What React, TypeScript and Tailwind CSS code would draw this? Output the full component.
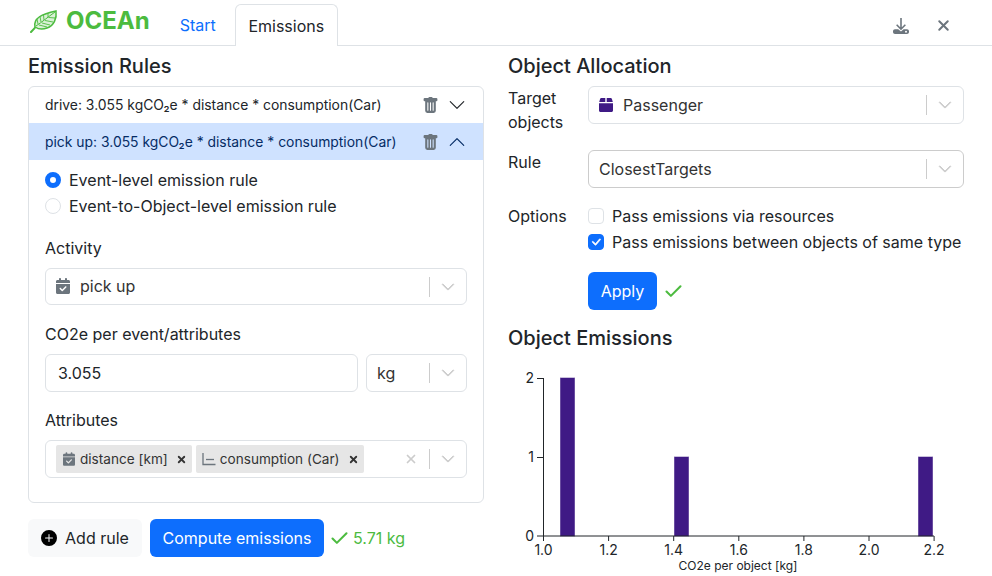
import { BsCheckLg, BsChevronDown, BsChevronUp, BsPlusCircleFill, BsTrashFill } from "react-icons/bs";
import { FaCalendarCheck } from "react-icons/fa6";
import { Check as CheckMark, X } from "lucide-react";

function Leaf() {
  return (
    <svg viewBox="0 0 28 23" className="h-[23px] w-[28px]" fill="none" stroke="#4cbb3f">
      <path d="M1 22 C3 20 5 18 7 15" strokeWidth="2" strokeLinecap="round" />
      <path d="M5 17 C3 8 12 4 26 1 C27 8 24 16 17 18 C12 20 8 19 5 17 Z" fill="#d9f1d5" strokeWidth="1.5" />
      <path d="M6 16 C12 12 18 7 25 2" strokeWidth="1" />
      <path d="M8 14 L7 9 M11 12 L10 6.5 M14 10 L13.5 5 M18 8 L18 3.5 M9 15 L17 17 M12 13 L20 15 M15 10.5 L23 12 M19 7.5 L25 8" strokeWidth="0.9" />
    </svg>
  );
}

function DownloadIcon() {
  return (
    <svg viewBox="0 0 16 16" className="h-4 w-4 text-[#6c757d]" fill="currentColor">
      <path d="M7.2 0h1.6v9.2l3-3 1.1 1.1L8 12.2 3.1 7.3l1.1-1.1 3 3z" />
      <path
        fillRule="evenodd"
        d="M2 11.2h3.2L8 13.6l2.6-2.4H14c1.1 0 2 .9 2 2v.8c0 1.1-.9 2-2 2H2c-1.1 0-2-.9-2-2v-.8c0-1.1.9-2 2-2zm11 1.5a1 1 0 1 0 0 2 1 1 0 0 0 0-2z"
      />
    </svg>
  );
}

function BoxIcon() {
  return (
    <svg viewBox="0 0 14 14" className="h-[14px] w-[14px] text-[#3f1a85]" fill="currentColor">
      <path d="M2.5 0H6.3V4H.2L1 1.2C1.2.5 1.8 0 2.5 0zM7.7 0h3.8c.7 0 1.3.5 1.5 1.2L13.8 4H7.7zM0 5.2h14V12.5c0 .8-.7 1.5-1.5 1.5h-11C.7 14 0 13.3 0 12.5z" />
    </svg>
  );
}

function AxisIcon() {
  return (
    <svg viewBox="0 0 14 14" className="h-[14px] w-[14px] text-[#6c757d]" fill="none" stroke="currentColor" strokeWidth="1.3">
      <path d="M1 1v11.5H13.5" />
      <path d="M4 7.5H12" />
    </svg>
  );
}

function SelectArrows({ clear }: { clear?: boolean }) {
  return (
    <div className="flex shrink-0 items-center">
      {clear && <X className="mr-[11px] h-[14px] w-[14px] text-[#cccccc]" strokeWidth={3} />}
      <span className="h-5 w-px bg-[#cccccc]" />
      <span className="flex w-9 justify-center">
        <BsChevronDown className="h-[14px] w-[14px] stroke-1 text-[#cccccc]" />
      </span>
    </div>
  );
}

function Select({
  children,
  className = "",
  darker,
}: {
  children: React.ReactNode;
  className?: string;
  darker?: boolean;
}) {
  return (
    <div
      className={`flex items-center justify-between rounded-[6px] border bg-white text-[#333333] ${darker ? "border-[#cccccc]" : "border-[#dee2e6]"} ${className}`}
    >
      <div className="flex min-w-0 items-center pb-px pl-[10px]">{children}</div>
      <SelectArrows />
    </div>
  );
}

function Tag({ icon, label }: { icon: React.ReactNode; label: string }) {
  return (
    <div className="flex h-7 items-center rounded-[2px] bg-[#e6e6e6] pl-[6px] pr-[5px] text-[13.6px] text-[#333333]">
      <span className="flex w-[14px] justify-center">{icon}</span>
      <span className="ml-[4px]">{label}</span>
      <X className="ml-2 h-[11px] w-[11px] text-[#333333]" strokeWidth={4} />
    </div>
  );
}

function RuleRow({ label, open }: { label: string; open?: boolean }) {
  return (
    <div
      className={`flex items-center justify-between pl-4 pr-[17px] text-[13.9px] ${open ? "h-[37px] bg-[#cfe2ff] pt-px text-[#052c65]" : "h-9 text-[#212529]"}`}
    >
      <span>{label}</span>
      <div className="flex items-center">
        <BsTrashFill className="h-[17px] w-[17px] text-[#6c757d]" />
        {open ? (
          <BsChevronUp className="ml-[9px] h-[18px] w-[18px]" />
        ) : (
          <BsChevronDown className="ml-[9px] h-[18px] w-[18px]" />
        )}
      </div>
    </div>
  );
}

function Radio({ label, checked }: { label: string; checked?: boolean }) {
  return (
    <div className="flex h-[26px] items-center text-[#212529]">
      <span
        className={`h-4 w-4 rounded-full ${checked ? "border-[5px] border-[#0d6efd] bg-white" : "border border-[#dee2e6] bg-white"}`}
      />
      <span className="ml-2">{label}</span>
    </div>
  );
}

function Check({ label, checked }: { label: string; checked?: boolean }) {
  return (
    <div className="flex h-[26px] items-center text-[#212529]">
      <span
        className={`flex h-4 w-4 items-center justify-center rounded-[4px] border ${checked ? "border-[#0d6efd] bg-[#0d6efd]" : "border-[#dee2e6] bg-white"}`}
      >
        {checked && <BsCheckLg className="h-3 w-3 stroke-[1] text-white" />}
      </span>
      <span className="ml-2">{label}</span>
    </div>
  );
}

function Histogram() {
  const bars = [
    { x: 560.5, y: 378, h: 158 },
    { x: 674.5, y: 457, h: 79 },
    { x: 918.5, y: 457, h: 79 },
  ];
  const xTicks = ["1.0", "1.2", "1.4", "1.6", "1.8", "2.0", "2.2"];
  const yTicks = [
    { y: 378, t: "2" },
    { y: 457, t: "1" },
    { y: 536, t: "0" },
  ];
  // coordinates are the screenshot's, shifted by the svg's own left/top
  return (
    <svg viewBox="508 360 484 216" className="mt-[10px] h-[216px] w-[484px]" fontFamily="Inter, sans-serif">
      {bars.map((b) => (
        <rect
          key={b.x}
          x={b.x}
          y={b.y}
          width={14}
          height={b.h}
          fill="#3f1a85"
          stroke="#3f1a85"
          strokeOpacity={0.55}
        />
      ))}
      <path d="M543.5 378V536H934M537 378.5h6M537 457.5h6M537 536h6" stroke="#212529" strokeWidth="1" fill="none" />
      {xTicks.map((t, i) => (
        <g key={t}>
          <line x1={543.5 + i * 65.1} x2={543.5 + i * 65.1} y1={536} y2={541} stroke="#212529" />
          <text x={543.5 + i * 65.1} y={555} fontSize="14" fill="#212529" textAnchor="middle">
            {t}
          </text>
        </g>
      ))}
      {yTicks.map((t) => (
        <text key={t.t} x={534} y={t.y + 5} fontSize="14" fill="#212529" textAnchor="end">
          {t.t}
        </text>
      ))}
      <text x={738} y={570} fontSize="12" fill="#212529" textAnchor="middle">
        CO2e per object [kg]
      </text>
    </svg>
  );
}

export default function App() {
  return (
    <div className="h-[576px] w-[992px] overflow-hidden bg-white font-['Inter',sans-serif] text-[16px] leading-6 text-[#212529]">
      <header className="flex h-[46px] items-end justify-between border-b border-[#dee2e6] pl-[30px] pr-[40px]">
        <div className="flex items-end">
          <div className="mb-[12px] flex items-center">
            <Leaf />
            <span className="ml-2 text-[24px] font-bold leading-[24px] text-[#4cbb3f]">OCEAn</span>
          </div>
          <span className="mb-2 ml-[30px] text-[#0d6efd]">Start</span>
          <div className="-mb-px ml-[19px] flex h-[42px] w-[103px] items-center justify-center rounded-t-[6px] border border-b-0 border-[#dee2e6] bg-white">
            Emissions
          </div>
        </div>
        <div className="mb-[11px] flex items-center">
          <DownloadIcon />
          <X className="ml-[26px] h-[17px] w-[17px] text-[#6c757d]" strokeWidth={2.8} />
        </div>
      </header>

      <main className="grid grid-cols-[456px_456px] gap-x-6 px-7">
        <section>
          <h2 className="h-[40px] pt-[8px] text-[20px] font-medium leading-6">Emission Rules</h2>
          <div className="h-[417px] rounded-[6px] border border-[#dee2e6]">
            <RuleRow label="drive: 3.055 kgCO₂e * distance * consumption(Car)" />
            <RuleRow label="pick up: 3.055 kgCO₂e * distance * consumption(Car)" open />
            <div className="px-4 pt-[7px]">
              <Radio label="Event-level emission rule" checked />
              <Radio label="Event-to-Object-level emission rule" />
              <label className="mt-[17px] block h-6 leading-6">Activity</label>
              <Select className="mt-2 h-[37px]">
                <FaCalendarCheck className="h-4 w-[14px] text-[#6c757d]" />
                <span className="ml-[10px]">pick up</span>
              </Select>
              <label className="mt-[17px] block h-6 leading-6">CO2e per event/attributes</label>
              <div className="mt-2 flex gap-2">
                <div className="flex h-[38px] flex-1 items-center rounded-[6px] border border-[#dee2e6] pb-px pl-3">3.055</div>
                <Select className="h-[38px] w-[101px]">kg</Select>
              </div>
              <label className="mt-[16px] block h-6 leading-6">Attributes</label>
              <div className="mt-2 flex h-[38px] items-center justify-between rounded-[6px] border border-[#dee2e6]">
                <div className="flex items-center gap-1 pl-[10px]">
                  <Tag icon={<FaCalendarCheck className="h-[14px] w-3 text-[#6c757d]" />} label="distance [km]" />
                  <Tag icon={<AxisIcon />} label="consumption (Car)" />
                </div>
                <SelectArrows clear />
              </div>
            </div>
          </div>
          <div className="mt-4 flex items-center">
            <div className="flex h-[38px] w-[114px] items-center justify-center rounded-[6px] bg-[#f8f9fa] text-[#212529]">
              <BsPlusCircleFill className="h-4 w-4 text-black" />
              <span className="ml-2">Add rule</span>
            </div>
            <div className="ml-2 flex h-[38px] w-[174px] items-center justify-center rounded-[6px] bg-[#0d6efd] text-white">
              Compute emissions
            </div>
            <div className="ml-[5px] flex items-center text-[#4cbb3f]">
              <CheckMark className="h-[21px] w-[21px]" strokeWidth={2.4} />
              <span className="ml-[3px]">5.71 kg</span>
            </div>
          </div>
        </section>

        <section>
          <h2 className="h-[40px] pt-[8px] text-[20px] font-medium leading-6">Object Allocation</h2>
          <div className="grid grid-cols-[80px_376px] items-start">
            <div className="leading-6">
              Target
              <br />
              objects
            </div>
            <Select className="h-[38px]">
              <BoxIcon />
              <span className="ml-[10px]">Passenger</span>
            </Select>
            <div className="mt-[16px]">Rule</div>
            <Select className="mt-[16px] h-[38px]" darker>
              ClosestTargets
            </Select>
            <div className="mt-[16px]">Options</div>
            <div className="mt-[15px]">
              <Check label="Pass emissions via resources" />
              <Check label="Pass emissions between objects of same type" checked />
              <div className="mt-[17px] flex items-center">
                <div className="flex h-[38px] w-[69px] items-center justify-center rounded-[6px] bg-[#0d6efd] text-white">
                  Apply
                </div>
                <CheckMark className="ml-[6px] h-[21px] w-[21px] text-[#4cbb3f]" strokeWidth={2.4} />
              </div>
            </div>
          </div>
          <h2 className="mt-[16px] text-[20px] font-medium leading-6">Object Emissions</h2>
          <Histogram />
        </section>
      </main>
    </div>
  );
}
